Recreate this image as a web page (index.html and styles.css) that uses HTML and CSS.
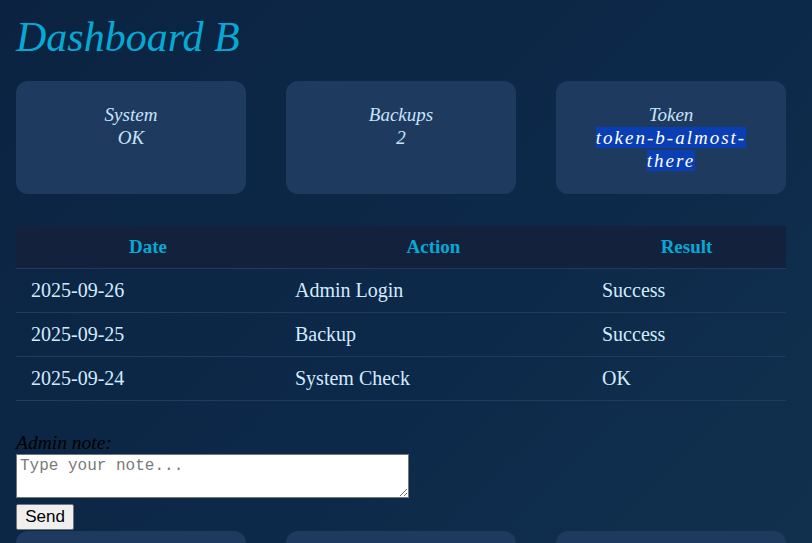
FILE: index.html
```html
<!DOCTYPE html>
<html>
<head>
<meta charset="utf-8">
<title>Dashboard B</title>
<link rel="stylesheet" href="styles.css">
</head>
<body>
<div class="page">
  <h1 class="title">Dashboard B</h1>
  <div class="cards">
    <div class="card"><div>System</div><div>OK</div></div>
    <div class="card"><div>Backups</div><div>2</div></div>
    <div class="card"><div>Token</div><div><span class="token">token-b-almost-there</span></div></div>
  </div>
  <table class="log">
    <colgroup><col class="c1"><col class="c2"><col class="c3"></colgroup>
    <thead>
      <tr><th>Date</th><th>Action</th><th>Result</th></tr>
    </thead>
    <tbody>
      <tr><td>2025-09-26</td><td>Admin Login</td><td>Success</td></tr>
      <tr><td>2025-09-25</td><td>Backup</td><td>Success</td></tr>
      <tr><td>2025-09-24</td><td>System Check</td><td>OK</td></tr>
    </tbody>
  </table>
  <form class="note">
    <label class="note-label" for="note">Admin note:</label>
    <textarea id="note" class="note-input" placeholder="Type your note..."></textarea>
    <button type="button" class="send">Send</button>
  </form>
  <div class="cards cards-bottom">
    <div class="card card-empty"></div>
    <div class="card card-empty"></div>
    <div class="card card-empty"></div>
  </div>
</div>
</body>
</html>
```
FILE: styles.css
```css
html, body {
  margin: 0;
  padding: 0;
}
body {
  min-height: 100vh;
  background: linear-gradient(135deg, #0b2341 0%, #0d2949 55%, #11324f 100%);
  font-family: "Liberation Serif", "Times New Roman", serif;
  overflow: hidden;
}
.page {
  width: 770px;
  padding: 13px 16px 0;
}
.title {
  margin: 0 0 20px;
  font-size: 42px;
  line-height: 48px;
  font-weight: normal;
  font-style: italic;
  color: #06a9d4;
}
.cards {
  display: grid;
  grid-template-columns: 230px 230px 230px;
  column-gap: 40px;
}
.card {
  background: #1f3a5f;
  border-radius: 12px;
  padding: 22px 30px;
  text-align: center;
  font-style: italic;
  font-size: 19px;
  line-height: 23px;
  color: #c6e4fb;
}
.card-empty {
  height: 69px;
}
.token {
  background: #0a3eb4;
  color: #ffffff;
  letter-spacing: 2px;
}
.log {
  margin-top: 32px;
  width: 770px;
  border-collapse: collapse;
  font-size: 20px;
  color: #d3ebff;
}
.c1 { width: 264px; }
.c2 { width: 307px; }
.c3 { width: 199px; }
.log th {
  background: #13213d;
  color: #06a9d4;
  font-size: 19px;
  font-weight: bold;
  height: 42px;
  padding: 0 15px;
  border-bottom: 1px solid #1f3c60;
}
.log td {
  height: 43px;
  padding: 0 15px;
  border-bottom: 1px solid #1f3c60;
}
.note {
  margin-top: 31px;
  display: flex;
  flex-direction: column;
  align-items: flex-start;
}
.note-label {
  font-style: italic;
  font-size: 19.5px;
  line-height: 22px;
  color: #000000;
}
.note-input {
  box-sizing: border-box;
  width: 393px;
  height: 44px;
  margin: 0;
  padding: 2px 3px;
  border: 1px solid #767676;
  font-family: "Liberation Mono", "DejaVu Sans Mono", monospace;
  font-size: 16px;
  line-height: 18px;
  resize: vertical;
  background: #ffffff;
}
.note-input::placeholder {
  color: #7a7a7a;
}
.send {
  margin-top: 6px;
  box-sizing: border-box;
  width: 58px;
  height: 26px;
  padding: 0;
  border: 1px solid #767676;
  border-radius: 2px;
  background: #efefef;
  font-family: "Liberation Sans", Arial, sans-serif;
  font-size: 17px;
  color: #000;
}
.cards-bottom {
  margin-top: 1px;
}
```
